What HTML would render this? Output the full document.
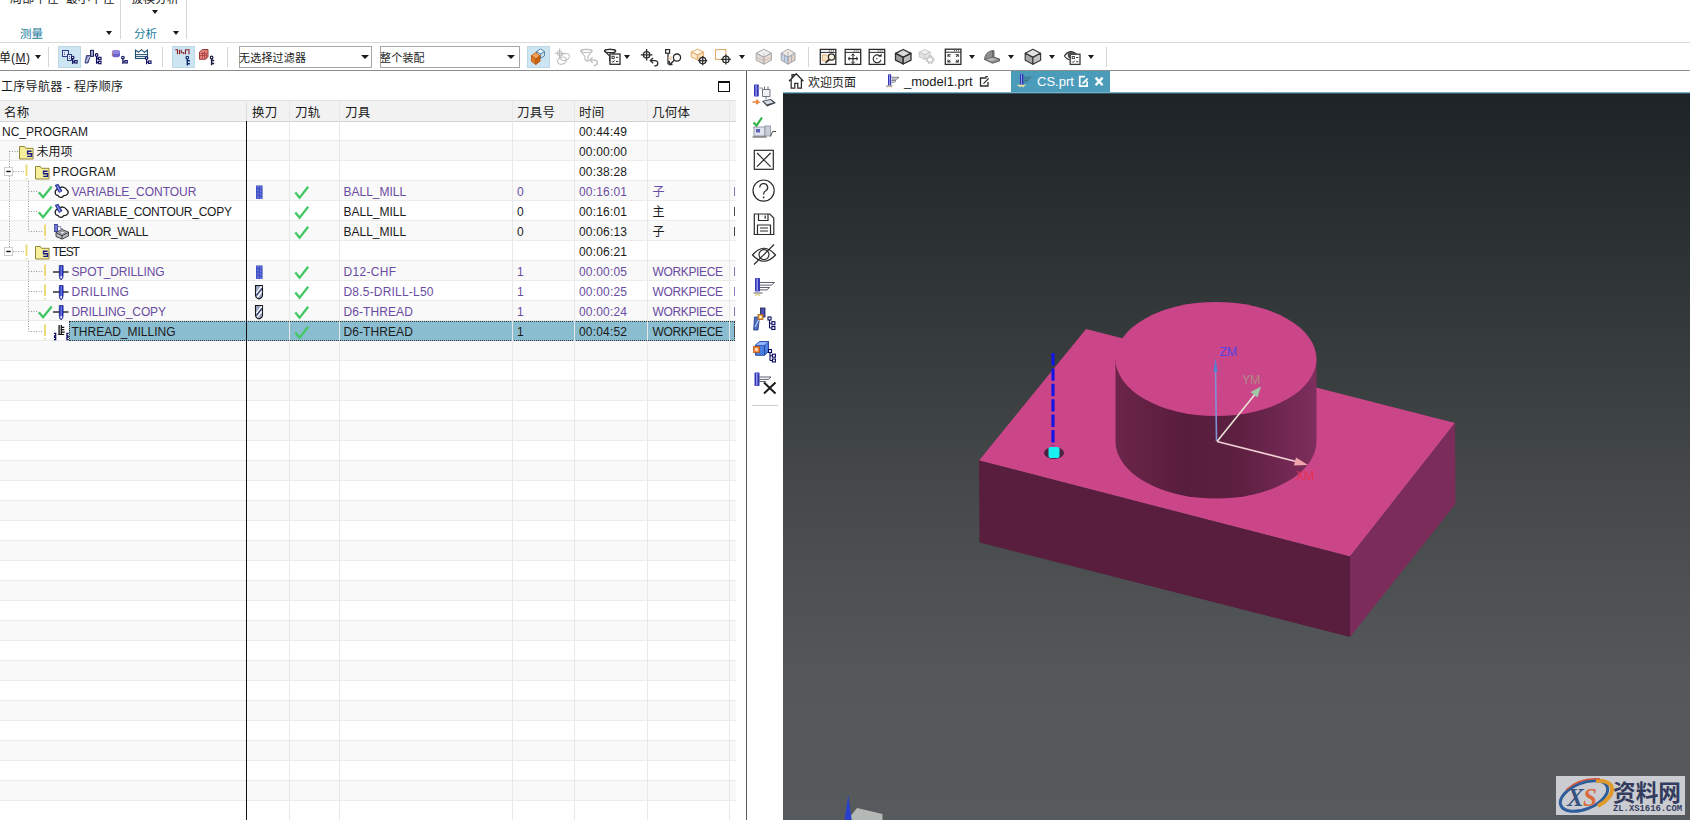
<!DOCTYPE html>
<html lang="zh-CN">
<head>
<meta charset="utf-8">
<title>NX CAM</title>
<style>
*{box-sizing:border-box;margin:0;padding:0}
html,body{width:1690px;height:820px;overflow:hidden;background:#fff}
body{position:relative;font-family:"Liberation Sans","Noto Sans CJK SC",sans-serif;font-size:12px;color:#1a1a1a}
.abs{position:absolute}
.t{position:absolute;white-space:nowrap;line-height:20px;height:20px}
/* ribbon */
#ribbon{position:absolute;left:0;top:0;width:1690px;height:43px;border-bottom:1px solid #d9d9d9;overflow:hidden}
.vsep{position:absolute;width:1px;background:#d6d6d6}
.arr{position:absolute;width:0;height:0;border-left:3px solid transparent;border-right:3px solid transparent;border-top:4px solid #1a1a1a}
/* toolbar */
#toolbar{position:absolute;left:0;top:43px;width:1690px;height:28px;border-bottom:1px solid #8c8c8c;background:#fff}
.combo{position:absolute;top:3px;height:22px;border:1px solid #a6a6a6;background:#fff;line-height:23px;padding-left:0;text-indent:-1px;letter-spacing:0.2px;font-size:11px;white-space:nowrap}
.hl{position:absolute;background:#cde5f2;border:1px solid #bcd8e6}
/* navigator */
#nav{position:absolute;left:0;top:72px;width:746px;height:748px;overflow:hidden;background:#fff}
#thead{position:absolute;left:0;top:28px;width:736px;height:22px;background:#f2f2f2;border-top:1px solid #e2e2e2;border-bottom:1px solid #d4d4d4}
.th{position:absolute;top:2px;line-height:20px;height:20px;white-space:nowrap;font-size:12.5px;letter-spacing:0.3px;margin-left:-1px}
.row{position:absolute;left:0;width:736px;height:20px;border-bottom:1px solid #ebebeb}
.row.alt{background:#f9f9f9}
.row .t{top:1px}
.pur{color:#6a4ba3}
.sel{background:#8bbdd0;outline:1px dotted #333;outline-offset:-1px}
.cline{position:absolute;top:29px;width:1px;height:719px;background:#e8e8e8}
/* viewport */
#view{position:absolute;left:783px;top:92px;width:907px;height:728px;background:linear-gradient(#1e2327 0%,#2f3436 25%,#45494a 55%,#54585a 80%,#565a5c 100%);border-top:1px solid #7fb2c2;overflow:hidden}
#view::before{content:"";position:absolute;left:0;top:0;width:907px;height:1px;background:#2f5567}
</style>
</head>
<body>
<!--RIBBON-->
<div id="ribbon"><div class="t" style="left:10px;top:-7px;height:12px;line-height:12px;letter-spacing:0.2px">局部半径&nbsp;&nbsp;最小半径</div><div class="t" style="left:131px;top:-7px;height:12px;line-height:12px">拔模分析</div><i class="arr" style="left:152px;top:10px"></i><div class="t" style="left:20px;top:24px;color:#1d7d9e;font-size:11.5px">测量</div><div class="t" style="left:134px;top:24px;color:#1d7d9e;font-size:11.5px">分析</div><i class="arr" style="left:106px;top:31px"></i><i class="arr" style="left:173px;top:31px"></i><i class="vsep" style="left:120px;top:0;height:39px"></i><i class="vsep" style="left:186px;top:0;height:39px"></i></div>
<!--TOOLBAR-->
<div id="toolbar"><div class="t" style="left:-1px;top:5px">单<span style="letter-spacing:0.5px">(<u>M</u>)</span></div><i class="arr" style="left:35px;top:12px"></i><i class="vsep" style="left:48px;top:4px;height:20px"></i><i class="vsep" style="left:162px;top:4px;height:20px"></i><i class="vsep" style="left:227px;top:4px;height:20px"></i><i class="vsep" style="left:808px;top:4px;height:20px"></i><i class="vsep" style="left:1106px;top:4px;height:20px"></i><i class="hl" style="left:58px;top:3px;width:23px;height:22px"></i><i class="hl" style="left:172px;top:3px;width:23px;height:22px"></i><i class="hl" style="left:527px;top:3px;width:23px;height:22px"></i><div class="combo" style="left:239px;width:133px">无选择过滤器<i class="arr" style="left:121px;top:8px;border-left-width:4px;border-right-width:4px"></i></div><div class="combo" style="left:380px;width:140px">整个装配<i class="arr" style="left:126px;top:8px;border-left-width:4px;border-right-width:4px"></i></div><i class="arr" style="left:624px;top:12px"></i><i class="arr" style="left:739px;top:12px"></i><i class="arr" style="left:969px;top:12px"></i><i class="arr" style="left:1008px;top:12px"></i><i class="arr" style="left:1049px;top:12px"></i><i class="arr" style="left:1088px;top:12px"></i></div>
<!--NAV-->
<div id="nav"><div class="t" style="left:1px;top:5px;letter-spacing:0.3px">工序导航器 - 程序顺序</div>
<div class="abs" style="left:718px;top:9px;width:12px;height:11px;border:1px solid #111;border-top:2px solid #111"></div>
<div id="thead"><span class="th" style="left:5px">名称</span><span class="th" style="left:253px">换刀</span><span class="th" style="left:296px">刀轨</span><span class="th" style="left:346px">刀具</span><span class="th" style="left:518px">刀具号</span><span class="th" style="left:580px">时间</span><span class="th" style="left:653px">几何体</span><i class="abs" style="left:246px;top:1px;width:1px;height:19px;background:#dcdcdc"></i><i class="abs" style="left:289px;top:1px;width:1px;height:19px;background:#dcdcdc"></i><i class="abs" style="left:339px;top:1px;width:1px;height:19px;background:#dcdcdc"></i><i class="abs" style="left:512px;top:1px;width:1px;height:19px;background:#dcdcdc"></i><i class="abs" style="left:574px;top:1px;width:1px;height:19px;background:#dcdcdc"></i><i class="abs" style="left:647px;top:1px;width:1px;height:19px;background:#dcdcdc"></i><i class="abs" style="left:729px;top:1px;width:1px;height:19px;background:#dcdcdc"></i></div>
<div class="row" style="top:49px"><span class="t" style="left:2px">NC_PROGRAM</span><span class="t" style="left:579px;letter-spacing:0.19px">00:44:49</span></div>
<div class="row alt" style="top:69px"><span class="t" style="left:36.5px">未用项</span><span class="t" style="left:579px;letter-spacing:0.19px">00:00:00</span></div>
<div class="row" style="top:89px"><span class="t" style="left:52.5px;letter-spacing:0.20px">PROGRAM</span><span class="t" style="left:579px;letter-spacing:0.19px">00:38:28</span></div>
<div class="row alt" style="top:109px"><span class="t pur" style="left:71.5px">VARIABLE_CONTOUR</span><span class="t pur" style="left:343.5px">BALL_MILL</span><span class="t pur" style="left:517px">0</span><span class="t pur" style="left:579px;letter-spacing:0.19px">00:16:01</span><span class="t pur" style="left:652.5px">子</span><i class="abs" style="left:734px;top:6px;width:1px;height:9px;background:#8d78bd"></i></div>
<div class="row" style="top:129px"><span class="t" style="left:71.5px;letter-spacing:-0.26px">VARIABLE_CONTOUR_COPY</span><span class="t" style="left:343.5px">BALL_MILL</span><span class="t" style="left:517px">0</span><span class="t" style="left:579px;letter-spacing:0.19px">00:16:01</span><span class="t" style="left:652.5px">主</span><i class="abs" style="left:734px;top:6px;width:1px;height:9px;background:#4a4a4a"></i></div>
<div class="row alt" style="top:149px"><span class="t" style="left:71.5px;letter-spacing:-0.36px">FLOOR_WALL</span><span class="t" style="left:343.5px">BALL_MILL</span><span class="t" style="left:517px">0</span><span class="t" style="left:579px;letter-spacing:0.19px">00:06:13</span><span class="t" style="left:652.5px">子</span><i class="abs" style="left:734px;top:6px;width:1px;height:9px;background:#4a4a4a"></i></div>
<div class="row" style="top:169px"><span class="t" style="left:52.5px;letter-spacing:-1.10px">TEST</span><span class="t" style="left:579px;letter-spacing:0.19px">00:06:21</span></div>
<div class="row alt" style="top:189px"><span class="t pur" style="left:71.5px;letter-spacing:-0.13px">SPOT_DRILLING</span><span class="t pur" style="left:343.5px;letter-spacing:0.30px">D12-CHF</span><span class="t pur" style="left:517px">1</span><span class="t pur" style="left:579px;letter-spacing:0.19px">00:00:05</span><span class="t pur" style="left:652.5px;letter-spacing:-0.36px">WORKPIECE</span><i class="abs" style="left:734px;top:6px;width:1px;height:9px;background:#8d78bd"></i></div>
<div class="row" style="top:209px"><span class="t pur" style="left:71.5px;letter-spacing:0.30px">DRILLING</span><span class="t pur" style="left:343.5px;letter-spacing:0.20px">D8.5-DRILL-L50</span><span class="t pur" style="left:517px">1</span><span class="t pur" style="left:579px;letter-spacing:0.19px">00:00:25</span><span class="t pur" style="left:652.5px;letter-spacing:-0.36px">WORKPIECE</span><i class="abs" style="left:734px;top:6px;width:1px;height:9px;background:#8d78bd"></i></div>
<div class="row alt" style="top:229px"><span class="t pur" style="left:71.5px;letter-spacing:-0.13px">DRILLING_COPY</span><span class="t pur" style="left:343.5px;letter-spacing:0.08px">D6-THREAD</span><span class="t pur" style="left:517px">1</span><span class="t pur" style="left:579px;letter-spacing:0.19px">00:00:24</span><span class="t pur" style="left:652.5px;letter-spacing:-0.36px">WORKPIECE</span><i class="abs" style="left:734px;top:6px;width:1px;height:9px;background:#8d78bd"></i></div>
<div class="row" style="top:249px"><i class="abs sel" style="left:69px;top:0;width:666px;height:20px"></i><span class="t" style="left:71.5px">THREAD_MILLING</span><span class="t" style="left:343.5px;letter-spacing:0.08px">D6-THREAD</span><span class="t" style="left:517px">1</span><span class="t" style="left:579px;letter-spacing:0.19px">00:04:52</span><span class="t" style="left:652.5px;letter-spacing:-0.36px">WORKPIECE</span><i class="abs" style="left:734px;top:6px;width:1px;height:9px;background:#4a4a4a"></i></div>
<div class="row alt" style="top:269px"></div>
<div class="row" style="top:289px"></div>
<div class="row alt" style="top:309px"></div>
<div class="row" style="top:329px"></div>
<div class="row alt" style="top:349px"></div>
<div class="row" style="top:369px"></div>
<div class="row alt" style="top:389px"></div>
<div class="row" style="top:409px"></div>
<div class="row alt" style="top:429px"></div>
<div class="row" style="top:449px"></div>
<div class="row alt" style="top:469px"></div>
<div class="row" style="top:489px"></div>
<div class="row alt" style="top:509px"></div>
<div class="row" style="top:529px"></div>
<div class="row alt" style="top:549px"></div>
<div class="row" style="top:569px"></div>
<div class="row alt" style="top:589px"></div>
<div class="row" style="top:609px"></div>
<div class="row alt" style="top:629px"></div>
<div class="row" style="top:649px"></div>
<div class="row alt" style="top:669px"></div>
<div class="row" style="top:689px"></div>
<div class="row alt" style="top:709px"></div>
<div class="row" style="top:729px"></div>
<i class="cline" style="left:289px"></i><i class="cline" style="left:339px"></i><i class="cline" style="left:512px"></i><i class="cline" style="left:574px"></i><i class="cline" style="left:647px"></i><i class="cline" style="left:729px"></i><i class="abs" style="left:246px;top:49px;width:1px;height:700px;background:#111"></i>
</div>
<i class="abs" style="left:746px;top:71px;width:1px;height:749px;background:#5c5c5c"></i><i class="abs" style="left:752px;top:405px;width:26px;height:1px;background:#cfcfcf"></i>
<div class="abs" style="left:1011px;top:71px;width:99px;height:22px;background:#4b9bbb"></div><div class="t" style="left:808px;top:73px">欢迎页面</div><div class="t" style="left:904px;top:72px;font-size:13px">_model1.prt</div><div class="t" style="left:1037px;top:72px;font-size:13px;color:#fff">CS.prt</div>
<!--VIEW-->
<div id="view"><svg class="abs" style="left:0;top:0" width="907" height="727" viewBox="783 93 907 727">
<defs>
<linearGradient id="cylg" x1="0" x2="1" y1="0" y2="0">
<stop offset="0" stop-color="#6b2549"/><stop offset="0.35" stop-color="#581d3d"/><stop offset="0.6" stop-color="#5c1f40"/><stop offset="1" stop-color="#7e2e5d"/>
</linearGradient>
</defs>
<polygon points="1086,329 979,460.5 1350,556.5 1455,423" fill="#cb4589"/>
<polygon points="979,460.5 1350,556.5 1350,637 979.5,542.5" fill="#591d3d"/>
<polygon points="1350,556.5 1455,423 1455.5,504 1350,637" fill="#7b2c5a"/>
<path d="M1115.5,359 L1115.5,441.5 A100.5,57 0 0 0 1316.5,441.5 L1316.5,359 Z" fill="url(#cylg)"/>
<ellipse cx="1216" cy="359" rx="100.5" ry="57" fill="#cb4589"/>
<ellipse cx="1054" cy="453" rx="10" ry="6" fill="#4a2340"/>
<rect x="1048.5" y="447" width="11" height="11" rx="2" fill="#19f0f0"/>
<line x1="1053" y1="353" x2="1053" y2="446" stroke="#1414e6" stroke-width="3.2" stroke-dasharray="12.4,3"/>
<line x1="1216.5" y1="441" x2="1215.5" y2="366" stroke="#7f93d6" stroke-width="1.6"/>
<polygon points="1213.3,372 1217.7,372 1215.5,358" fill="#5a7fd0"/>
<line x1="1217" y1="441.5" x2="1256" y2="393" stroke="#e9e4d6" stroke-width="1.6"/>
<polygon points="1261,386.5 1257.5,397.5 1250.5,392" fill="#9fc7a6"/>
<line x1="1217" y1="441.5" x2="1296" y2="461.5" stroke="#f1cfd3" stroke-width="1.6"/>
<polygon points="1308,465 1294,465.5 1296,457.5" fill="#f0a5ad"/>
<text x="1219.5" y="355.5" font-family="Liberation Sans, sans-serif" font-size="12.5" fill="#5246e6" letter-spacing="-0.4">ZM</text>
<text x="1242" y="384" font-family="Liberation Sans, sans-serif" font-size="12.5" fill="#b08a86" letter-spacing="-0.4">YM</text>
<text x="1296" y="480" font-family="Liberation Sans, sans-serif" font-size="12.5" fill="#e83250" letter-spacing="-0.4">XM</text>
<polygon points="857,808 882.5,814 882.5,826 849,826 849,818" fill="#b4b8b6"/>
<polygon points="843.5,826 848.3,795 852.5,826" fill="#2a40cc"/>
<rect x="1556" y="776" width="129" height="39" fill="#cbccd1"/>
<ellipse cx="1584" cy="796" rx="25" ry="13" fill="none" stroke="#2d5d9a" stroke-width="3" transform="rotate(-22 1584 796)"/>
<path d="M1596,781 A25,13 -22 0 1 1598,806" fill="none" stroke="#e09a2b" stroke-width="4"/>
<path d="M1566,790 Q1580,777 1600,779" fill="none" stroke="#d4573a" stroke-width="1.5"/>
<text x="1567" y="806" font-family="Liberation Serif, serif" font-style="italic" font-weight="bold" font-size="25" fill="#36527f">X</text>
<text x="1583" y="806" font-family="Liberation Serif, serif" font-style="italic" font-weight="bold" font-size="25" fill="#d96a3c">S</text>
<text x="1613" y="801" font-family="Liberation Sans, Noto Sans CJK SC, sans-serif" font-weight="bold" font-size="23" fill="#333c5e" textLength="68" lengthAdjust="spacingAndGlyphs">资料网</text>
<text x="1613" y="811" font-family="Liberation Mono, monospace" font-weight="bold" font-size="8.5" fill="#333c5e" textLength="69" lengthAdjust="spacingAndGlyphs">ZL.XS1616.COM</text>
</svg>
</div>
<svg class="abs" style="left:0;top:0;pointer-events:none" width="1690" height="820" viewBox="0 0 1690 820">
<rect x="62.5" y="50.5" width="6" height="6" fill="#dfeaf6" stroke="#2d3f86" stroke-width="1"/><path d="M64.5,52.5v0.8M64.5,54v0.8" stroke="#2d3f86" stroke-width="1"/><rect x="67.5" y="54.5" width="4" height="6" fill="#dfeaf6" stroke="#2d3f86" stroke-width="1"/><path d="M69.5,56.2v0.8M69.5,58v0.8" stroke="#2d3f86" stroke-width="1"/><circle cx="72.7" cy="57.6" r="1.3" fill="#fff" stroke="#0a0a5c" stroke-width="1.1"/><path d="M72.7,58.9 v5 M72.7,61.8 h2" stroke="#0a0a5c" stroke-width="1.2" fill="none"/><rect x="74.7" y="60.6" width="2.4" height="2.4" fill="#fff" stroke="#0a0a5c" stroke-width="1.1"/><rect x="90.5" y="50.3" width="3" height="6" fill="#9aa3d6" stroke="#1c1c4e" stroke-width="1"/><polygon points="86.5,55.5 90.5,55.5 88,63 85,63" fill="#8088c4" stroke="#2a2a60" stroke-width="0.8"/><path d="M86.2,61.5 L89.5,56.5" stroke="#e8e8f6" stroke-width="0.9"/><circle cx="96.6" cy="55.0" r="1.3" fill="#fff" stroke="#0a0a5c" stroke-width="1.2"/><path d="M96.6,56.3 v7.5 M96.6,58.5 h2 M96.6,62.5 h2" stroke="#0a0a5c" stroke-width="1.3" fill="none"/><rect x="98.6" y="57.3" width="2.4" height="2.4" fill="#fff" stroke="#0a0a5c" stroke-width="1.1"/><rect x="98.6" y="61.3" width="2.4" height="2.4" fill="#fff" stroke="#0a0a5c" stroke-width="1.1"/><path d="M112,52 a4,2 0 0 1 8,0 v3.2 a4,2 0 0 1 -8,0z" fill="#6c63c8"/><ellipse cx="116" cy="52" rx="4" ry="2" fill="#8f86e0"/><path d="M112.3,52.5v3" stroke="#d58a4a" stroke-width="1"/><circle cx="122.9" cy="57.6" r="1.3" fill="#fff" stroke="#0a0a5c" stroke-width="1.1"/><path d="M122.9,58.9 v5 M122.9,61.8 h2" stroke="#0a0a5c" stroke-width="1.2" fill="none"/><rect x="124.9" y="60.6" width="2.4" height="2.4" fill="#fff" stroke="#0a0a5c" stroke-width="1.1"/><path d="M135.5,50 l0,8.5 h12 l0,-8.5 l-3,2.3 l-3,-2.6 l-3,2.6 z" fill="#fff" stroke="#1f4d6e" stroke-width="1.1"/><path d="M135.5,54.6h12 M135.5,56.6h12" stroke="#1f4d6e" stroke-width="1"/><circle cx="146.6" cy="58.0" r="1.3" fill="#fff" stroke="#0a0a5c" stroke-width="1.1"/><path d="M146.6,59.3 v5 M146.6,62.2 h2" stroke="#0a0a5c" stroke-width="1.2" fill="none"/><rect x="148.6" y="61.0" width="2.4" height="2.4" fill="#fff" stroke="#0a0a5c" stroke-width="1.1"/><path d="M175.3,49.7 h2.2 v4.6 M179.5,49.7 v4.6 M181.3,49.7 v3 h2.5 v1.6 M185.5,54.3 v-4.6 h3.5 v4.6" stroke="#8e1f28" stroke-width="1.1" fill="none"/><circle cx="187.3" cy="57.7" r="1.3" fill="#fff" stroke="#0b2a6a" stroke-width="1.2"/><path d="M187.3,59.0 v6.5 M187.3,60.7 h2.6 M187.3,63.7 h2.6" stroke="#0b2a6a" stroke-width="1.4" fill="none"/><path d="M199.5,52 l3,-2.5 h5.5 v7 l-2.5,2.8 h-6 z" fill="#e2807c" stroke="#8c2e2c" stroke-width="0.9"/><path d="M201,53.5h5.5v5.5 M202.5,52v6 M204.5,51.5v7 M200,55.5h6" stroke="#a43b38" stroke-width="0.7" fill="none"/><circle cx="211.6" cy="57.5" r="1.3" fill="#fff" stroke="#1a1a3e" stroke-width="1.2"/><path d="M211.6,58.8 v6.5 M211.6,60.5 h2.6 M211.6,63.5 h2.6" stroke="#1a1a3e" stroke-width="1.4" fill="none"/><polygon points="540.5,49.0 544.5,51.6 540.5,54.1 536.5,51.6" fill="#eef6fb" stroke="#4c7ea6" stroke-width="0.9" stroke-linejoin="round"/><polygon points="536.5,51.6 540.5,54.1 540.5,58.5 536.5,55.9" fill="#dcecf6" stroke="#4c7ea6" stroke-width="0.9" stroke-linejoin="round"/><polygon points="544.5,51.6 540.5,54.1 540.5,58.5 544.5,55.9" fill="#c9e0ee" stroke="#4c7ea6" stroke-width="0.9" stroke-linejoin="round"/><polygon points="535.8,52.5 540.0,55.7 535.8,59.0 531.5,55.7" fill="#f3a45c" stroke="#b5560a" stroke-width="0.8" stroke-linejoin="round"/><polygon points="531.5,55.7 535.8,59.0 535.8,64.5 531.5,61.3" fill="#e07a20" stroke="#b5560a" stroke-width="0.8" stroke-linejoin="round"/><polygon points="540.0,55.7 535.8,59.0 535.8,64.5 540.0,61.3" fill="#c9640f" stroke="#b5560a" stroke-width="0.8" stroke-linejoin="round"/><path d="M554.5,53.2 h10 M559.6,48.5 v9.5" stroke="#bcbcbc" stroke-width="1.1"/><circle cx="559.6" cy="53.2" r="2.4" fill="none" stroke="#bcbcbc" stroke-width="1"/><ellipse cx="565" cy="57" rx="4.6" ry="3.4" transform="rotate(-25 565 57)" fill="none" stroke="#bdbdbd" stroke-width="1.1"/><ellipse cx="562" cy="60.6" rx="4.6" ry="3.4" transform="rotate(-25 562 60.6)" fill="none" stroke="#bdbdbd" stroke-width="1.1"/><path d="M580.5,51 a5.8,1.6 0 0 1 11.6,0 l-4.2,5.5 v4.8 l-3,-1.5 v-3.3 z" fill="#fff" stroke="#bdbdbd" stroke-width="1.1"/><ellipse cx="586.3" cy="51" rx="5.8" ry="1.6" fill="none" stroke="#bdbdbd" stroke-width="1"/><path d="M590.5,60.1 h4.2 a2.6,2.6 0 0 1 0,5.2 h-1" fill="none" stroke="#bdbdbd" stroke-width="1.3"/><path d="M592.6,62.7 m0,-5.2 l-2.8,2.6 l2.8,2.6" fill="none" stroke="#bdbdbd" stroke-width="1.3"/><path d="M604.5,51 a5.6,1.6 0 0 1 11.2,0 l-4,5 v5 h-2 v-5 z" fill="#fff" stroke="#2b2b2b" stroke-width="1.2"/><ellipse cx="610.1" cy="51" rx="5.6" ry="1.6" fill="none" stroke="#2b2b2b" stroke-width="1.1"/><rect x="610.0" y="54.0" width="10.0" height="10.3" fill="#fff" stroke="#2b2b2b" stroke-width="1.3"/><rect x="612.0" y="56.2" width="2.2" height="2.2" fill="none" stroke="#2b2b2b" stroke-width="0.9"/><path d="M616.0,57.3 h2.2 M612.0,61.3 l0.9,1 l1.6,-1.8 M616.0,61.5 h2.2" stroke="#2b2b2b" stroke-width="1" fill="none"/><circle cx="646.6" cy="54.8" r="3.2" fill="none" stroke="#2b2b2b" stroke-width="1.3"/><path d="M640.8,54.8 h11.6 M646.6,49.0 v11.6" stroke="#2b2b2b" stroke-width="1.3"/><path d="M651.0,60.6 h4.2 a2.6,2.6 0 0 1 0,5.2 h-1" fill="none" stroke="#2b2b2b" stroke-width="1.3"/><path d="M653.1,63.2 m0,-5.2 l-2.8,2.6 l2.8,2.6" fill="none" stroke="#2b2b2b" stroke-width="1.3"/><rect x="665.6" y="49.6" width="4" height="3.6" fill="#fff" stroke="#2b2b2b" stroke-width="1.2"/><path d="M668,53.2 v11" stroke="#2b2b2b" stroke-width="1.3"/><rect x="668.5" y="56.5" width="3.5" height="3.5" fill="#f1d9bb"/><circle cx="677" cy="57.6" r="3.6" fill="#fff" stroke="#2b2b2b" stroke-width="1.3"/><path d="M674.3,60.3 l-4.3,4 M669.2,61 v3.5 h3.3" stroke="#2b2b2b" stroke-width="1.4" fill="none"/><polygon points="697.4,49.2 703.6,52.1 697.4,54.9 691.2,52.1" fill="#fff5e8" stroke="#e4aa6a" stroke-width="1.0" stroke-linejoin="round"/><polygon points="691.2,52.1 697.4,54.9 697.4,59.8 691.2,56.9" fill="#fde8cf" stroke="#e4aa6a" stroke-width="1.0" stroke-linejoin="round"/><polygon points="703.6,52.1 697.4,54.9 697.4,59.8 703.6,56.9" fill="#f8dcb8" stroke="#e4aa6a" stroke-width="1.0" stroke-linejoin="round"/><circle cx="702.7" cy="60.6" r="3.3" fill="#fff"/><circle cx="702.7" cy="60.6" r="3.2" fill="none" stroke="#2b2b2b" stroke-width="1.3"/><path d="M698.1,60.6 h9.2 M702.7,56.0 v9.2" stroke="#2b2b2b" stroke-width="1.3"/><rect x="715.5" y="49.6" width="10.4" height="9.8" fill="#fff" stroke="#e4aa6a" stroke-width="1.1"/><circle cx="725.9" cy="59.4" r="3.3" fill="#fff"/><circle cx="725.9" cy="59.4" r="3.2" fill="none" stroke="#2b2b2b" stroke-width="1.3"/><path d="M720.9,59.4 h10.0 M725.9,54.4 v10.0" stroke="#2b2b2b" stroke-width="1.3"/><polygon points="763.8,49.2 771.4,53.2 763.8,57.3 756.2,53.2" fill="#eeeeee" stroke="#a9a6a4" stroke-width="1.0" stroke-linejoin="round"/><polygon points="756.2,53.2 763.8,57.3 763.8,64.2 756.2,60.2" fill="#dddad8" stroke="#a9a6a4" stroke-width="1.0" stroke-linejoin="round"/><polygon points="771.4,53.2 763.8,57.3 763.8,64.2 771.4,60.2" fill="#e8dcd6" stroke="#a9a6a4" stroke-width="1.0" stroke-linejoin="round"/><path d="M756.2,57.5 l7.6,3.2 l7.6,-3.2 M763.8,53.2 v7.5" stroke="#c8b6ac" stroke-width="0.8" fill="none"/><polygon points="788.1,49.2 795.0,53.2 788.1,57.3 781.2,53.2" fill="#f3e9e2" stroke="#a3a4ac" stroke-width="1.0" stroke-linejoin="round"/><polygon points="781.2,53.2 788.1,57.3 788.1,64.2 781.2,60.2" fill="#c7d5e4" stroke="#a3a4ac" stroke-width="1.0" stroke-linejoin="round"/><polygon points="795.0,53.2 788.1,57.3 788.1,64.2 795.0,60.2" fill="#e6d3c6" stroke="#a3a4ac" stroke-width="1.0" stroke-linejoin="round"/><path d="M788.1,52 v9 M784.6,55 v7 M791.6,55 v7" stroke="#9aa9bd" stroke-width="0.9" fill="none"/><rect x="820.3" y="49.4" width="15.5" height="15.0" fill="#fff" stroke="#2b2b2b" stroke-width="1.3"/><path d="M820.3,52.4 h15.5" stroke="#2b2b2b" stroke-width="1"/><path d="M828.8,51.0 h1 m1,0 h1 m1,0 h1" stroke="#2b2b2b" stroke-width="1"/><rect x="822.3" y="55" width="7.5" height="6" fill="#fbe3c6" stroke="#e4a968" stroke-width="0.8"/><circle cx="831.5" cy="57" r="3.1" fill="#fdf2e4" stroke="#2b2b2b" stroke-width="1.2"/><path d="M829.3,59.3 l-3.8,3.6" stroke="#2b2b2b" stroke-width="1.6"/><rect x="845.2" y="49.4" width="15.5" height="15.0" fill="#fff" stroke="#2b2b2b" stroke-width="1.3"/><path d="M845.2,52.4 h15.5" stroke="#2b2b2b" stroke-width="1"/><path d="M853.7,51.0 h1 m1,0 h1 m1,0 h1" stroke="#2b2b2b" stroke-width="1"/><path d="M848.2,58.6 h9.6 M853,54 v9.4" stroke="#2b2b2b" stroke-width="1.1"/><path d="M849.8,57 l-1.8,1.6 l1.8,1.6 M856.2,57 l1.8,1.6 l-1.8,1.6 M851.4,55.6 l1.6,-1.8 l1.6,1.8 M851.4,61.8 l1.6,1.8 l1.6,-1.8" stroke="#2b2b2b" stroke-width="1" fill="none"/><rect x="869.2" y="49.4" width="15.5" height="15.0" fill="#fff" stroke="#2b2b2b" stroke-width="1.3"/><path d="M869.2,52.4 h15.5" stroke="#2b2b2b" stroke-width="1"/><path d="M877.7,51.0 h1 m1,0 h1 m1,0 h1" stroke="#2b2b2b" stroke-width="1"/><path d="M880,56.2 a3.9,3.9 0 1 0 0.9,3.6" fill="none" stroke="#2b2b2b" stroke-width="1.2"/><path d="M881.6,53.6 v3.2 h-3.2 z" fill="#2b2b2b"/><circle cx="876.8" cy="58.8" r="0.7" fill="#2b2b2b"/><polygon points="903.2,49.5 911.0,53.4 903.2,57.3 895.5,53.4" fill="#d9d9d9" stroke="#2d2d2d" stroke-width="1.3" stroke-linejoin="round"/><polygon points="895.5,53.4 903.2,57.3 903.2,64.0 895.5,60.1" fill="#9f9f9f" stroke="#2d2d2d" stroke-width="1.3" stroke-linejoin="round"/><polygon points="911.0,53.4 903.2,57.3 903.2,64.0 911.0,60.1" fill="#bdbdbd" stroke="#2d2d2d" stroke-width="1.3" stroke-linejoin="round"/><polygon points="924.7,49.5 930.2,52.2 924.7,54.9 919.2,52.2" fill="#efefef" stroke="#c9c9c9" stroke-width="1.0" stroke-linejoin="round"/><polygon points="919.2,52.2 924.7,54.9 924.7,59.5 919.2,56.8" fill="#e2e2e2" stroke="#c9c9c9" stroke-width="1.0" stroke-linejoin="round"/><polygon points="930.2,52.2 924.7,54.9 924.7,59.5 930.2,56.8" fill="#e8e8e8" stroke="#c9c9c9" stroke-width="1.0" stroke-linejoin="round"/><circle cx="930" cy="59.7" r="3.4" fill="#fff" stroke="#c6c6c6" stroke-width="2.2" stroke-dasharray="1.6,1.1"/><circle cx="930" cy="59.7" r="2.6" fill="#fff" stroke="#c6c6c6" stroke-width="1.2"/><rect x="945.3" y="49.2" width="15.6" height="15.2" fill="#fff" stroke="#2b2b2b" stroke-width="1.3"/><path d="M945.3,52.2 h15.6" stroke="#2b2b2b" stroke-width="1"/><path d="M953.9,50.8 h1 m1,0 h1 m1,0 h1" stroke="#2b2b2b" stroke-width="1"/><path d="M948,57 v-2.3 h2.6 M955.6,54.7 h2.6 v2.3 M958.2,59.6 v2.3 h-2.6 M950.6,61.9 h-2.6 v-2.3" stroke="#2b2b2b" stroke-width="1.1" fill="none"/><path d="M950.3,57 l-2,-2 M955.9,57 l2,-2 M950.3,59.8 l-2,2 M955.9,59.8 l2,2" stroke="#2b2b2b" stroke-width="0.9"/><path d="M984.5,59.5 q0.5,-7.5 8,-9 l1.5,0.3 v6.5 l5.5,1.7 v2 l-7,2.2 z" fill="#8f8f8f" stroke="#555" stroke-width="0.9" stroke-linejoin="round"/><path d="M984.5,59.5 l7.5,-2.3 l7.5,1.8 M992.5,50.6 v6.6" stroke="#5a5a5a" stroke-width="0.8" fill="none"/><path d="M986,59.6 l6.3,-1.8 l5,1.3 l-5.3,1.8 z" fill="#b9b9b9"/><polygon points="1032.9,49.3 1040.6,53.3 1032.9,57.4 1025.2,53.3" fill="#e2e2e2" stroke="#3a3a3a" stroke-width="1.2" stroke-linejoin="round"/><polygon points="1025.2,53.3 1032.9,57.4 1032.9,64.3 1025.2,60.2" fill="#a9a9a9" stroke="#3a3a3a" stroke-width="1.2" stroke-linejoin="round"/><polygon points="1040.6,53.3 1032.9,57.4 1032.9,64.3 1040.6,60.2" fill="#c4c4c4" stroke="#3a3a3a" stroke-width="1.2" stroke-linejoin="round"/><path d="M1064.3,56 q6,-8 12.5,-1.5 M1064.3,56 q2.5,3.5 5.5,4" fill="none" stroke="#2b2b2b" stroke-width="1.2"/><circle cx="1071" cy="55.3" r="3.3" fill="#555"/><rect x="1070.2" y="54.2" width="9.8" height="10.2" fill="#fff" stroke="#3a3a3a" stroke-width="1.3"/><rect x="1072.2" y="56.4" width="2.2" height="2.2" fill="none" stroke="#3a3a3a" stroke-width="0.9"/><path d="M1076.2,57.5 h2.2 M1072.2,61.5 l0.9,1 l1.6,-1.8 M1076.2,61.7 h2.2" stroke="#3a3a3a" stroke-width="1" fill="none"/><path d="M789,81.3 l7.2,-7.6 l7.2,7.6 M791.2,79.6 v8.4 h3.6 v-4.6 h3 v4.6 h3.6 v-8.4 M792,77.5 v-3 h1.8 v1.3" fill="none" stroke="#2b2b2b" stroke-width="1.25" stroke-linejoin="miter"/><rect x="888.0" y="74.3" width="3.2" height="11.2" rx="0.8" fill="#3436b4"/><rect x="889.0" y="74.8" width="1.0" height="10.2" fill="#8f95ea"/><path d="M891.5,77.3 h7.5 l-2,1.8 h-5 M891.5,80.6 h4.5 l-1.6,1.6 h-2.9 M886,86 h6.5" stroke="#6a6a78" stroke-width="0.9" fill="none"/><path d="M887.5,87.3 l2,-1.6 l2,1.6" stroke="#c8b76a" stroke-width="1" fill="none"/><path d="M986.5,78 h-6 v8 h7.5 v-4" fill="none" stroke="#2b2b2b" stroke-width="1.3"/><path d="M983.5,83.6 l5.2,-5.2 M985.3,76.6 h2.5" stroke="#2b2b2b" stroke-width="1.3" fill="none"/><rect x="1020.0" y="74.3" width="3.4" height="11.0" rx="0.8" fill="#3436b4"/><rect x="1021.0" y="74.8" width="1.0" height="10.0" fill="#8f95ea"/><path d="M1023.6,77.2 h7.6 l-2,1.8 h-5 M1023.6,80.4 h4.5 l-1.6,1.6 h-2.9" stroke="#3a6f88" stroke-width="0.9" fill="none"/><path d="M1017.5,85.4 h8 M1019.4,87 l2.2,-1.8 l2.2,1.8" stroke="#e9e2a4" stroke-width="1.1" fill="none"/><path d="M1085,76.6 h-5.3 v9.6 h7.4 v-5" fill="none" stroke="#fff" stroke-width="1.7"/><path d="M1082.6,83.6 l5,-5" stroke="#fff" stroke-width="1.8" fill="none"/><path d="M1095.6,77.6 l7,7.6 M1102.6,77.6 l-7,7.6" stroke="#fff" stroke-width="2.4"/><rect x="754.0" y="84.5" width="4.8" height="12.0" rx="0.8" fill="#3436b4"/><rect x="755.4" y="85.0" width="1.4" height="11.0" fill="#8f95ea"/><path d="M757.5,88 h5 v5" stroke="#8f949c" stroke-width="1" fill="none"/><path d="M762.5,89.5 h7.5 v7 h-7.5 z" fill="#eef0f3" stroke="#666c78" stroke-width="0.9"/><path d="M764.5,89.5 v-3 M768,89.5 v-3 M766,96.5 v3" stroke="#666c78" stroke-width="1"/><polygon points="762,101 771,99 776,103 767,106.5" fill="#3e4450"/><polygon points="764,101.2 770.6,99.9 773.4,102.4 766.8,104.6" fill="#d8dbe2"/><path d="M752.5,102 h6 l-2.2,-2.2 M758.5,102 l-2.2,2.2" stroke="#e8853a" stroke-width="1.7" fill="none"/><path d="M753.5,122.5 l3,3 l5.5,-8" stroke="#2fb344" stroke-width="2.2" fill="none"/><rect x="754" y="127" width="11" height="9" fill="#dfe3ee" stroke="#8a8fa0" stroke-width="0.9"/><rect x="756" y="129" width="4" height="3.5" fill="#5a63b8"/><rect x="765" y="126" width="5.5" height="10" fill="#c9cdd6" stroke="#8a8fa0" stroke-width="0.8"/><path d="M752.5,137 h14 M770.5,136.5 l2,-5 h3.5" stroke="#4a4a4a" stroke-width="1" fill="none"/><rect x="754.3" y="150.3" width="19" height="19" fill="#fff" stroke="#2b2b2b" stroke-width="1.2"/><path d="M757,153 l13.6,13.6 M770.6,153 l-13.6,13.6" stroke="#2b2b2b" stroke-width="1.2"/><circle cx="763.6" cy="190.6" r="10.6" fill="#fff" stroke="#2b2b2b" stroke-width="1.2"/><path d="M759.8,187.6 a3.9,3.9 0 1 1 5.6,3.4 q-1.8,1 -1.8,3.4" fill="none" stroke="#2b2b2b" stroke-width="1.3"/><circle cx="763.6" cy="197.4" r="0.9" fill="#2b2b2b"/><path d="M754.3,214 h15.5 l4,4 v16.5 h-19.5 z" fill="#fff" stroke="#2b2b2b" stroke-width="1.2" stroke-linejoin="miter"/><path d="M758.5,214 v6.5 h9.5 v-6.5 M765.2,215.5 v3.2" stroke="#2b2b2b" stroke-width="1.2" fill="none"/><path d="M757.5,234.5 v-9.5 h13 v9.5 M760,228 h8 M760,231 h8" stroke="#2b2b2b" stroke-width="1.2" fill="none"/><path d="M752.5,255 q11.5,-13.5 23,0 q-11.5,12.5 -23,0 z" fill="#fff" stroke="#2b2b2b" stroke-width="1.2"/><circle cx="764" cy="254.6" r="5" fill="none" stroke="#2b2b2b" stroke-width="1.2"/><path d="M754,264.5 l20,-20" stroke="#2b2b2b" stroke-width="1.2"/><rect x="755.0" y="278.0" width="5.0" height="13.5" rx="0.8" fill="#3436b4"/><rect x="756.5" y="278.5" width="1.5" height="12.5" fill="#8f95ea"/><path d="M760,282.5 h14.5 l-3,2.6 h-11.5 M760,287.5 h9.5 l-2.6,2.4 h-6.9 M753.5,293 h9" stroke="#54586a" stroke-width="0.95" fill="none"/><path d="M755.2,295.8 l2.4,-2 l2.4,2" stroke="#d6c66f" stroke-width="1.1" fill="none"/><rect x="760.5" y="308" width="4.5" height="9" fill="#4a4fb0" stroke="#1c1c4e" stroke-width="0.8"/><polygon points="754.5,317 759.5,317 758,330 753.6,330" fill="#4d6fc6" stroke="#253a7a" stroke-width="0.8"/><path d="M755,327 l3.6,-7" stroke="#cfe0ff" stroke-width="1"/><rect x="758" y="314.5" width="5" height="5" fill="#f2a23a" stroke="#a7631a" stroke-width="0.8"/><circle cx="760.5" cy="317" r="1.2" fill="#fff"/><rect x="768.0" y="317.0" width="3" height="3" fill="#fff" stroke="#0a0a5c" stroke-width="1.1"/><path d="M769.5,320.0 v8 M769.5,323.2 h2.4 M769.5,328.0 h2.4" stroke="#0a0a5c" stroke-width="1.1" fill="none"/><rect x="771.9" y="321.7" width="3" height="3" fill="#fff" stroke="#0a0a5c" stroke-width="1.1"/><rect x="771.9" y="326.5" width="3" height="3" fill="#fff" stroke="#0a0a5c" stroke-width="1.1"/><path d="M755.5,345 l4,-3.5 h9 v10 l-4,3.8 h-9 z" fill="#4a7fe0" stroke="#1f3f9a" stroke-width="0.9"/><path d="M755.5,345 h9 v10.3 M764.5,345 l4,-3.5" stroke="#1f3f9a" stroke-width="0.9" fill="none"/><polygon points="756,345 759.6,342 768,342 764.4,345" fill="#8fb6ff"/><rect x="753.5" y="346.5" width="6" height="6" fill="#f08a3a" stroke="#b5541a" stroke-width="0.8"/><circle cx="756.5" cy="349.5" r="1.5" fill="#fde6cf"/><rect x="768.5" y="349.5" width="3" height="3" fill="#fff" stroke="#0a0a5c" stroke-width="1.1"/><path d="M770.0,352.5 v8 M770.0,355.7 h2.4 M770.0,360.5 h2.4" stroke="#0a0a5c" stroke-width="1.1" fill="none"/><rect x="772.4" y="354.2" width="3" height="3" fill="#fff" stroke="#0a0a5c" stroke-width="1.1"/><rect x="772.4" y="359.0" width="3" height="3" fill="#fff" stroke="#0a0a5c" stroke-width="1.1"/><rect x="754.5" y="372.5" width="5.0" height="13.5" rx="0.8" fill="#3436b4"/><rect x="756.0" y="373.0" width="1.5" height="12.5" fill="#8f95ea"/><path d="M759,377 h12 l-2.6,2.4 h-9.4 M759,381.5 h7" stroke="#54586a" stroke-width="0.95" fill="none"/><path d="M764,382.5 l11.5,11 M775.5,382.5 l-11.5,11" stroke="#1c1c1c" stroke-width="2"/><path d="M9.5,151 V251 M9.5,151.5 H18 M13,171.5 H24 M13,251.5 H24" stroke="#9a9a9a" stroke-width="1" stroke-dasharray="1,1.5" fill="none"/><path d="M28.5,181 V231 M28.5,191.5 H37 M28.5,211.5 H37 M28.5,231.5 H43" stroke="#9a9a9a" stroke-width="1" stroke-dasharray="1,1.5" fill="none"/><path d="M28.5,261 V331 M28.5,271.5 H43 M28.5,291.5 H43 M28.5,311.5 H37 M28.5,331.5 H43" stroke="#9a9a9a" stroke-width="1" stroke-dasharray="1,1.5" fill="none"/><path d="M19.5,146.5 h5 l1.2,1.8 h7.3 v10.7 h-13.5 z" fill="#f7ee9c" stroke="#8f8636" stroke-width="1"/><path d="M31.6,151.2 h-4 v2.6 h4 v2.6 h-4.4" fill="none" stroke="#1c1c8a" stroke-width="1.4"/><rect x="4.5" y="167.5" width="8" height="8" fill="#fff" stroke="#d0d0d0" stroke-width="1"/><path d="M6.3,171.5 h4.4" stroke="#111" stroke-width="1.4"/><path d="M26.5,164.5 v11.5" stroke="#eadb78" stroke-width="2"/><rect x="25.5" y="178.0" width="2" height="1.6" fill="#e9e2b0"/><path d="M35.5,166.5 h5 l1.2,1.8 h7.3 v10.7 h-13.5 z" fill="#f7ee9c" stroke="#8f8636" stroke-width="1"/><path d="M47.6,171.2 h-4 v2.6 h4 v2.6 h-4.4" fill="none" stroke="#1c1c8a" stroke-width="1.4"/><path d="M38.8,192.3 l4.3,5 l8.6,-10.8" fill="none" stroke="#43c765" stroke-width="2.3" stroke-linejoin="miter"/><path d="M57.0,189.2 q-2.6,1.5 -1.6,4.5 q0.6,2 2.6,1.7 q0.6,2.2 3.2,1.9 q1.8,-0.2 2.3,-1.6 q2.8,0.2 4.2,-1.8 q1.4,-2.4 -1,-4.2 q-1.6,-2.4 -4.6,-2.8 z" fill="#fff" stroke="#1a1a1a" stroke-width="1.2" stroke-linejoin="round"/><polygon points="55.2,185.2 58.2,184.2 62.0,191.0 59.0,192.4" fill="#3c49c8" stroke="#1c2470" stroke-width="0.7"/><path d="M57.2,185.6 l3,6" stroke="#aab3f2" stroke-width="0.9"/><path d="M38.8,212.3 l4.3,5 l8.6,-10.8" fill="none" stroke="#43c765" stroke-width="2.3" stroke-linejoin="miter"/><path d="M57.0,209.2 q-2.6,1.5 -1.6,4.5 q0.6,2 2.6,1.7 q0.6,2.2 3.2,1.9 q1.8,-0.2 2.3,-1.6 q2.8,0.2 4.2,-1.8 q1.4,-2.4 -1,-4.2 q-1.6,-2.4 -4.6,-2.8 z" fill="#fff" stroke="#1a1a1a" stroke-width="1.2" stroke-linejoin="round"/><polygon points="55.2,205.2 58.2,204.2 62.0,211.0 59.0,212.4" fill="#3c49c8" stroke="#1c2470" stroke-width="0.7"/><path d="M57.2,205.6 l3,6" stroke="#aab3f2" stroke-width="0.9"/><path d="M45.0,224.5 v11.5" stroke="#eadb78" stroke-width="2"/><rect x="44.0" y="238.0" width="2" height="1.6" fill="#e9e2b0"/><polygon points="56.0,232.5 62.0,229.5 68.5,232.0 68.5,236.0 62.0,239.1 56.0,236.5" fill="#b9bcc2" stroke="#33363c" stroke-width="0.9" stroke-linejoin="round"/><path d="M56.0,232.7 l6,3 l6.5,-3.2 M62.0,235.5 v3.6" stroke="#33363c" stroke-width="0.9" fill="none"/><polygon points="59.0,232.7 62.4,231.1 65.6,232.5 62.2,234.3" fill="#e6e8ec" stroke="#55585e" stroke-width="0.6"/><rect x="54.6" y="224.3" width="3" height="7.5" fill="#3c49c8" stroke="#1c2470" stroke-width="0.6"/><path d="M55.1,226.1 h2 M55.1,228.1 h2 M55.1,230.1 h2" stroke="#c3c9f6" stroke-width="0.8"/><path d="M57.6,226.5 h3 v2 h2" stroke="#6a6f9a" stroke-width="0.8" fill="none"/><rect x="4.5" y="247.5" width="8" height="8" fill="#fff" stroke="#d0d0d0" stroke-width="1"/><path d="M6.3,251.5 h4.4" stroke="#111" stroke-width="1.4"/><path d="M26.5,244.5 v11.5" stroke="#eadb78" stroke-width="2"/><rect x="25.5" y="258.0" width="2" height="1.6" fill="#e9e2b0"/><path d="M35.5,246.5 h5 l1.2,1.8 h7.3 v10.7 h-13.5 z" fill="#f7ee9c" stroke="#8f8636" stroke-width="1"/><path d="M47.6,251.2 h-4 v2.6 h4 v2.6 h-4.4" fill="none" stroke="#1c1c8a" stroke-width="1.4"/><path d="M45.0,264.5 v11.5" stroke="#eadb78" stroke-width="2"/><rect x="44.0" y="278.0" width="2" height="1.6" fill="#e9e2b0"/><path d="M53.0,272.0 h15.5" stroke="#111" stroke-width="1.3"/><path d="M59.3,265.5 h3.8 v10 q0,3.6 -1.9,4.4 q-1.9,-0.8 -1.9,-4.4 z" fill="#2a35c8" stroke="#151c80" stroke-width="0.7"/><path d="M61.2,266.0 v9.5" stroke="#8d97f0" stroke-width="0.9"/><ellipse cx="61.2" cy="277.1" rx="1" ry="1.7" fill="#e8ecff"/><path d="M45.0,284.5 v11.5" stroke="#eadb78" stroke-width="2"/><rect x="44.0" y="298.0" width="2" height="1.6" fill="#e9e2b0"/><path d="M53.0,292.0 h15.5" stroke="#111" stroke-width="1.3"/><path d="M59.3,285.5 h3.8 v10 q0,3.6 -1.9,4.4 q-1.9,-0.8 -1.9,-4.4 z" fill="#2a35c8" stroke="#151c80" stroke-width="0.7"/><path d="M61.2,286.0 v9.5" stroke="#8d97f0" stroke-width="0.9"/><ellipse cx="61.2" cy="297.1" rx="1" ry="1.7" fill="#e8ecff"/><path d="M38.8,312.3 l4.3,5 l8.6,-10.8" fill="none" stroke="#43c765" stroke-width="2.3" stroke-linejoin="miter"/><path d="M53.0,312.0 h15.5" stroke="#111" stroke-width="1.3"/><path d="M59.3,305.5 h3.8 v10 q0,3.6 -1.9,4.4 q-1.9,-0.8 -1.9,-4.4 z" fill="#2a35c8" stroke="#151c80" stroke-width="0.7"/><path d="M61.2,306.0 v9.5" stroke="#8d97f0" stroke-width="0.9"/><ellipse cx="61.2" cy="317.1" rx="1" ry="1.7" fill="#e8ecff"/><path d="M45.0,324.5 v11.5" stroke="#eadb78" stroke-width="2"/><rect x="44.0" y="338.0" width="2" height="1.6" fill="#e9e2b0"/><path d="M59.1,325.0 v9 M61.3,325.0 v9" stroke="#111" stroke-width="1.3" fill="none"/><path d="M61.3,327.3 h3 M61.3,329.7 h3 M61.3,332.1 h3.4 M58.1,334.5 h6" stroke="#111" stroke-width="1.2" fill="none"/><path d="M53.9,333.3 h1.8 v2.6 h-1.2 v1.4 h1.2 v2.4 h-1.8" stroke="#0a0a5c" stroke-width="1.2" fill="none"/><path d="M68.7,333.3 h-1.8 v2.6 h1.2 v1.4 h-1.2 v2.4 h1.8" stroke="#0a0a5c" stroke-width="1.2" fill="none"/><rect x="256.0" y="185.5" width="6.6" height="13.4" fill="#3f51c6"/><path d="M258.0,185.7 v13 M260.8,186.5 v13" stroke="#8a96e8" stroke-width="0.9" stroke-dasharray="2,1.4"/><rect x="256.0" y="265.5" width="6.6" height="13.4" fill="#3f51c6"/><path d="M258.0,265.7 v13 M260.8,266.5 v13" stroke="#8a96e8" stroke-width="0.9" stroke-dasharray="2,1.4"/><path d="M255.5,285.5 h7 v9.6 q0,3 -3.5,3.8 q-3.5,-0.8 -3.5,-3.8 z" fill="#9ba6c4" stroke="#16181e" stroke-width="1.1"/><path d="M256.4,293.2 l5.4,-7 M257.2,297.4 l4.6,-6" stroke="#fff" stroke-width="1.5"/><path d="M256.4,295.4 l5.4,-7" stroke="#2d3a6e" stroke-width="1.1"/><path d="M255.5,305.5 h7 v9.6 q0,3 -3.5,3.8 q-3.5,-0.8 -3.5,-3.8 z" fill="#9ba6c4" stroke="#16181e" stroke-width="1.1"/><path d="M256.4,313.2 l5.4,-7 M257.2,317.4 l4.6,-6" stroke="#fff" stroke-width="1.5"/><path d="M256.4,315.4 l5.4,-7" stroke="#2d3a6e" stroke-width="1.1"/><path d="M295.3,192.6 l4.3,5 l8.6,-10.8" fill="none" stroke="#43c765" stroke-width="2.3" stroke-linejoin="miter"/><path d="M295.3,212.6 l4.3,5 l8.6,-10.8" fill="none" stroke="#43c765" stroke-width="2.3" stroke-linejoin="miter"/><path d="M295.3,232.6 l4.3,5 l8.6,-10.8" fill="none" stroke="#43c765" stroke-width="2.3" stroke-linejoin="miter"/><path d="M295.3,272.6 l4.3,5 l8.6,-10.8" fill="none" stroke="#43c765" stroke-width="2.3" stroke-linejoin="miter"/><path d="M295.3,292.6 l4.3,5 l8.6,-10.8" fill="none" stroke="#43c765" stroke-width="2.3" stroke-linejoin="miter"/><path d="M295.3,312.6 l4.3,5 l8.6,-10.8" fill="none" stroke="#43c765" stroke-width="2.3" stroke-linejoin="miter"/><path d="M295.3,332.6 l4.3,5 l8.6,-10.8" fill="none" stroke="#43c765" stroke-width="2.3" stroke-linejoin="miter"/>
</svg>

</body>
</html>
